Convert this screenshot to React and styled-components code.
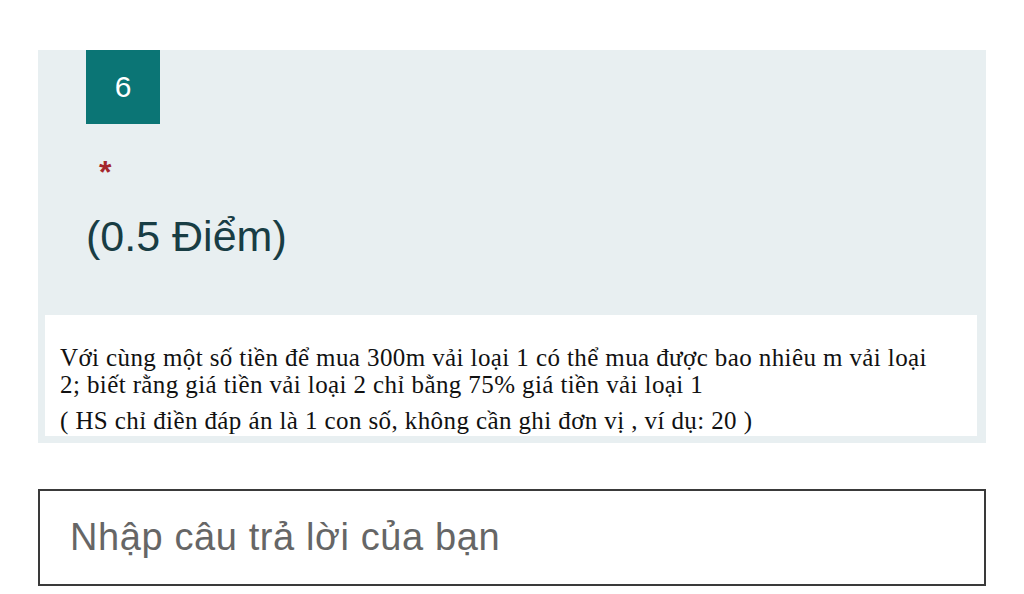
import React from 'react'
import styled, { createGlobalStyle } from 'styled-components'

const GlobalStyle = createGlobalStyle`
  html, body {
    margin: 0;
    padding: 0;
    background: #ffffff;
  }
  body {
    font-family: 'Liberation Sans', Arial, sans-serif;
  }
`

const Page = styled.div`
  width: 1024px;
  height: 594px;
  padding: 50px 38px 0 38px;
  box-sizing: border-box;
  overflow: hidden;
`

const QuestionPanel = styled.div`
  background: #e8eff1;
  padding: 0 9px 7px 7px;
  display: flex;
  flex-direction: column;
`

const Header = styled.div`
  padding-left: 41px;
  height: 265px;
  display: flex;
  flex-direction: column;
`

const Badge = styled.div`
  width: 74px;
  height: 74px;
  background: #0b7575;
  color: #ffffff;
  font-size: 30px;
  display: flex;
  align-items: center;
  justify-content: center;
`

const Required = styled.span`
  color: #a4262c;
  font-size: 32px;
  font-weight: bold;
  margin-top: 33px;
  margin-left: 13px;
  line-height: 30px;
  height: 24px;
`

const Points = styled.div`
  color: #183d44;
  font-size: 43px;
  margin-top: 31px;
  line-height: 48px;
`

const Content = styled.div`
  background: #ffffff;
  padding: 29px 30px 0 15px;
  height: 121px;
  box-sizing: border-box;
  font-family: 'Liberation Serif', 'Times New Roman', serif;
  font-size: 25px;
  letter-spacing: 0.4px;
  color: #111111;
  overflow: hidden;
`

const Paragraph = styled.p`
  margin: 0 0 ${p => p.gap}px 0;
  line-height: 27px;
`

const AnswerInput = styled.input`
  display: block;
  margin-top: 46px;
  width: 948px;
  height: 97px;
  box-sizing: border-box;
  border: 2px solid #3a3a3a;
  border-radius: 0;
  padding: 0 30px;
  font-family: 'Liberation Sans', Arial, sans-serif;
  font-size: 38px;
  letter-spacing: 0.6px;
  color: #333;
  outline: none;
  &::placeholder {
    color: #666666;
  }
`

export default function App() {
  return (
    <Page>
      <GlobalStyle />
      <QuestionPanel>
        <Header>
          <Badge>6</Badge>
          <Required>*</Required>
          <Points>(0.5 Điểm)</Points>
        </Header>
        <Content>
          <Paragraph gap={9}>
            Với cùng một số tiền để mua 300m vải loại 1 có thể mua được bao nhiêu m vải loại 2; biết rằng giá tiền vải loại 2 chỉ bằng 75% giá tiền vải loại 1
          </Paragraph>
          <Paragraph gap={0}>
            ( HS chỉ điền đáp án là 1 con số, không cần ghi đơn vị , ví dụ: 20 )
          </Paragraph>
        </Content>
      </QuestionPanel>
      <AnswerInput placeholder="Nhập câu trả lời của bạn" />
    </Page>
  )
}
